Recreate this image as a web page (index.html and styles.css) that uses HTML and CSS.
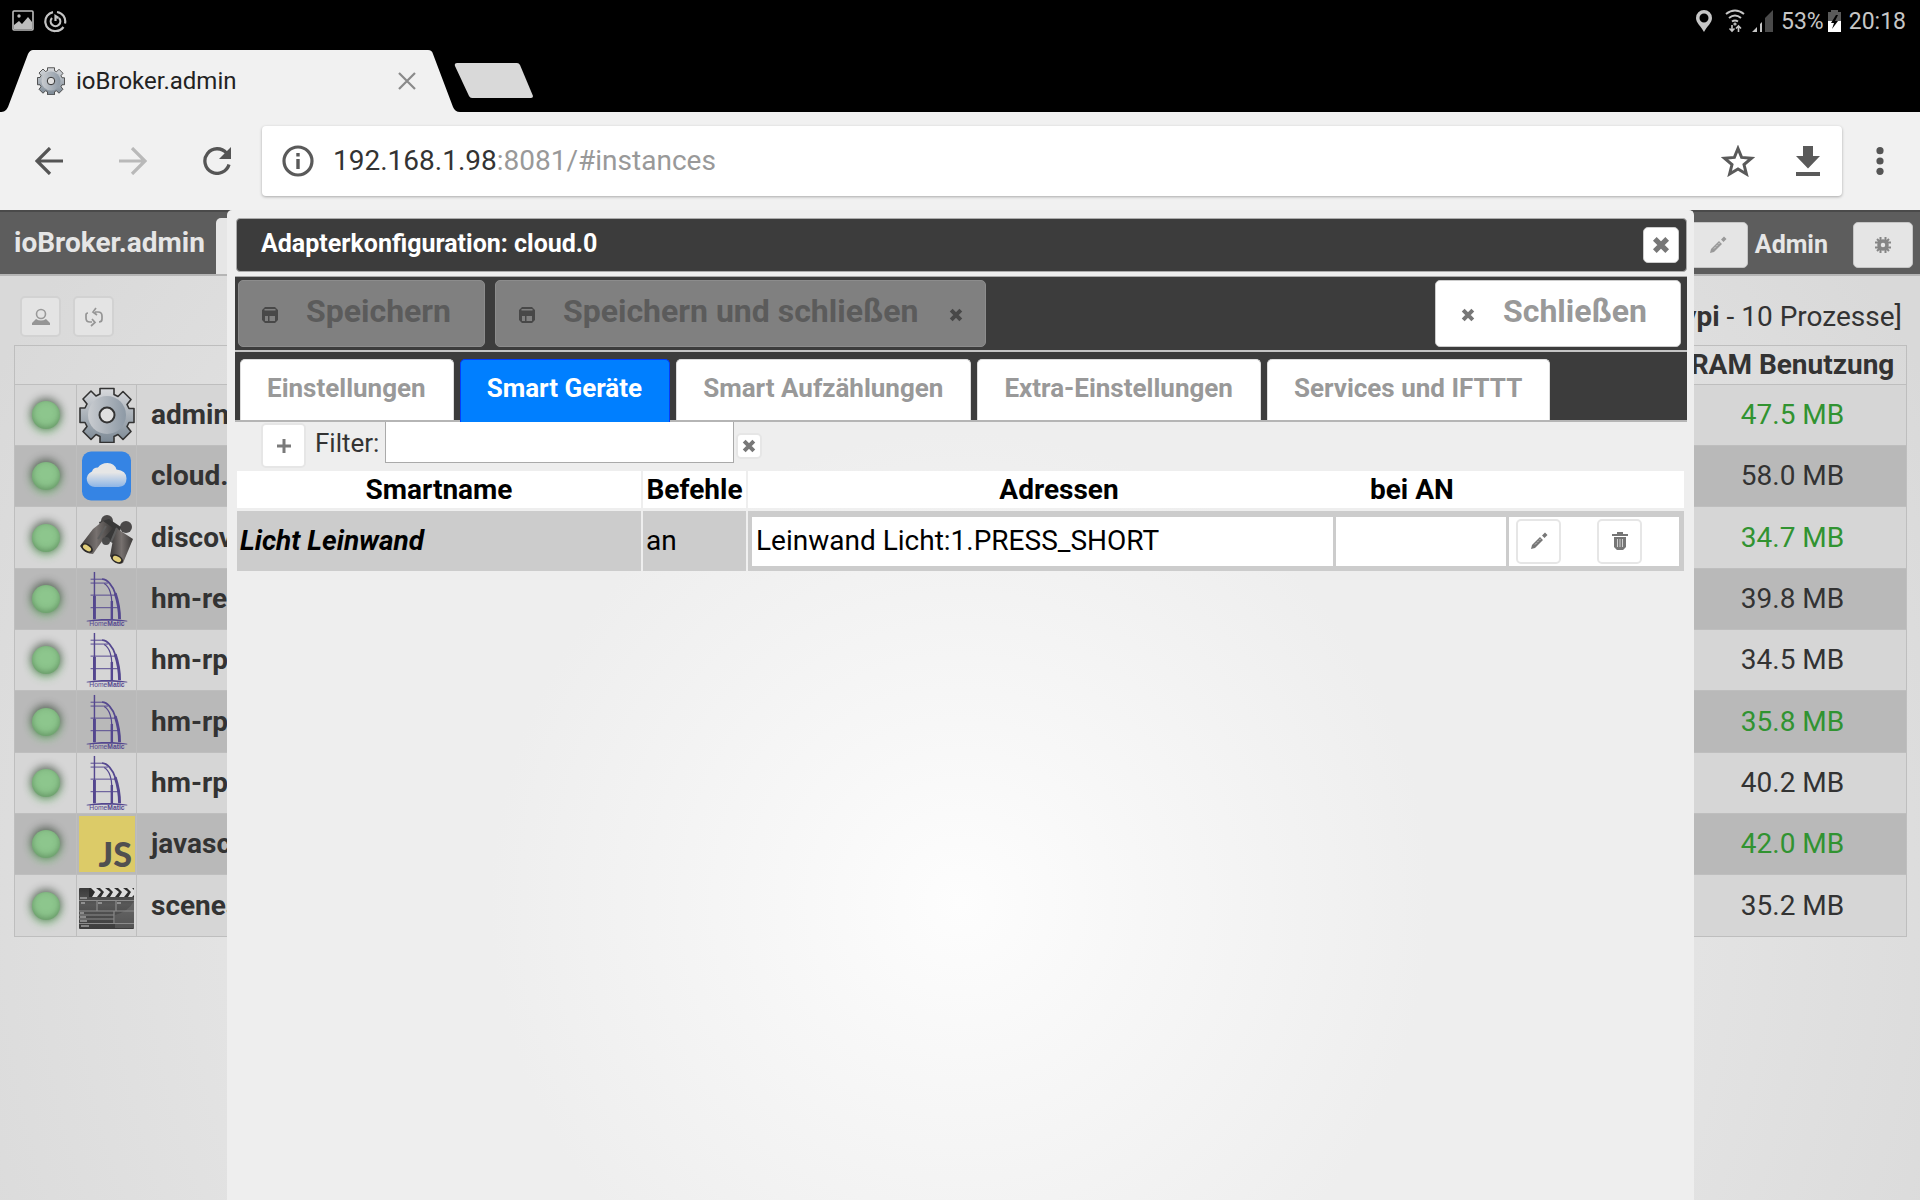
FILE: index.html
```html
<!DOCTYPE html>
<html lang="de">
<head>
<meta charset="utf-8">
<title>ioBroker.admin</title>
<link rel="stylesheet" href="styles.css">
</head>
<body>
<svg class="defs" aria-hidden="true">
  <defs>
    <linearGradient id="steel" x1="0" y1="0" x2="0" y2="1"><stop offset="0" stop-color="#d8dadd"/><stop offset="1" stop-color="#7b8894"/></linearGradient>
    <linearGradient id="steel2" x1="0" y1="0" x2="1" y2="0"><stop offset="0" stop-color="#c9ccd0"/><stop offset="1" stop-color="#8d99a5"/></linearGradient>
    <linearGradient id="cloudfill" x1="0" y1="0" x2="0" y2="1"><stop offset="0.4" stop-color="#e6e6e6"/><stop offset="1" stop-color="#8db5e6"/></linearGradient>
    <linearGradient id="tube" x1="0" y1="0" x2="1" y2="0"><stop offset="0" stop-color="#3b3938"/><stop offset="0.5" stop-color="#77716f"/><stop offset="1" stop-color="#3b3938"/></linearGradient>
    <linearGradient id="slate" x1="0" y1="0" x2="0" y2="1"><stop offset="0" stop-color="#3a3a3a"/><stop offset="0.4" stop-color="#585858"/><stop offset="1" stop-color="#3c3c3c"/></linearGradient>
    <symbol id="gear" viewBox="0 0 56 56">
      <path fill="url(#steel)" stroke="#333" stroke-width="1.6" stroke-linejoin="round" d="M21 1.500h14v6l4 2 5-5 8 8-4 5 2 4h5v14h-5l-2 4 4 5-8 8-5-5-4 2v6H21v-6l-4-2-5 5-8-8 4-5-2-4H1V21h5l2-4-4-5 8-8 5 5 4-2z"/>
      <circle cx="28" cy="28" r="19" fill="url(#steel2)"/>
      <circle cx="28" cy="28" r="7.500" fill="#e0e0e0" stroke="#333" stroke-width="2"/>
    </symbol>
    <symbol id="x" viewBox="0 0 16 16"><path d="M2.500 2.500l11 11M13.500 2.500l-11 11" stroke="currentColor" stroke-width="4.600"/></symbol>
    <symbol id="pen" viewBox="0 0 18 18"><path fill="currentColor" d="M1 17l1-4 8-8 3 3-8 8zM12 3.500L15 .5 17.500 3l-3 3z"/><path d="M5 12.500l6-6" stroke="#fff" stroke-opacity=".6" stroke-dasharray="2 1"/></symbol>
    <symbol id="disk" viewBox="0 0 16 16"><path fill="currentColor" fill-rule="evenodd" d="M3 0h10l3 3v10l-3 3H3l-3-3V3zM2.500 2v1.500h11V2zM3 9v5h3V9zm4.500 0v5H13V9z"/></symbol>
    <symbol id="hm" viewBox="0 0 56 58">
      <g fill="none" stroke="#54478f">
        <path stroke-width="1" d="M11 8.500h13M11 12.500h18M11 25h26M11 38h30"/>
        <path stroke-width="1.200" d="M25 13c6 3 8 13 8 20"/>
        <path stroke-width="1.800" d="M23 8.500c5 0 11 6 14 16"/>
        <path stroke-width="3" d="M36.500 23c3 9 4.500 18 4.500 27M15 26v24"/>
        <path stroke-width="2.500" d="M33 31v19"/>
        <path stroke-width="1.500" d="M15 1v49"/>
      </g>
      <path fill="#54478f" d="M7 51.500c12-2.500 30-2.500 42 0v.8c-12-1.200-30-1.200-42 0z"/>
      <text x="28" y="57" text-anchor="middle" class="hm-text">Home<tspan font-weight="700">Matic</tspan></text>
    </symbol>
  </defs>
</svg>

<header class="status">
  <div class="status-left">
    <svg width="22" height="22" viewBox="0 0 22 22"><rect x="1" y="1" width="20" height="19" rx="1" fill="none" stroke="#bdbdbd" stroke-width="1.600"/><path fill="#bdbdbd" d="M2 15l5-4 3 3 6-7 4 5v7H2z"/><circle cx="7" cy="6" r="1.700" fill="#bdbdbd"/></svg>
    <svg width="23" height="23" viewBox="0 0 23 23" fill="none" stroke="#c4c4c4" stroke-width="2.200"><path d="M9 2.200A9.500 9.500 0 0 0 11.500 21a9.500 9.500 0 0 0 8-4M13 2a9.500 9.500 0 0 1 8 11.500"/><path d="M8 8a4.800 4.800 0 1 0 7 0M11.500 11V6l3 2"/></svg>
  </div>
  <div class="status-right">
    <svg width="16" height="22" viewBox="0 0 16 22"><path fill="#c6c6c6" fill-rule="evenodd" d="M8 0a8 8 0 0 0-8 8c0 5 5 8 8 14 3-6 8-9 8-14a8 8 0 0 0-8-8zm0 3.500a4.500 4.500 0 1 1 0 9 4.500 4.500 0 0 1 0-9z"/></svg>
    <svg class="wifi" width="20" height="24" viewBox="0 0 20 24" fill="none" stroke="#c6c6c6" stroke-width="2"><path d="M1 5q9-7 18 0M4 9q6-5 12 0M7 12.500q3-2 6 0"/><circle cx="10" cy="15" r=".6"/><path stroke-width="1.600" d="M7 16v6M4.500 19.500L7 22l2.500-2.500M13.500 23v-6M11 19.500l2.500-2.500 2.500 2.500"/></svg>
    <svg width="21" height="22" viewBox="0 0 21 22"><path fill="#c6c6c6" d="M0 22l5-5v5zM8 22v-8l2-2v10z"/><path fill="#4a4a4a" d="M13 22V8l8-8v22z"/></svg>
    <span class="status-text">53%</span>
    <svg class="battery" width="13" height="22" viewBox="0 0 13 22"><path fill="#5a5a5a" d="M0 2h3V0h7v2h3v20H0z"/><path fill="#fff" d="M0 11h13v11H0z"/><path fill="#000" d="M8 5l-5 8h3l-2 6 6-8H7l3-6z"/></svg>
    <span class="status-text clock">20:18</span>
  </div>
</header>

<div class="tabstrip">
  <div class="browser-tab">
    <svg class="tab-shape" viewBox="0 0 460 62" preserveAspectRatio="none"><path fill="#f1f1f1" d="M0 62c4 0 6-1 8-5L28 4q2-4 5-4h395q4 0 5 4l20 53q2 5 7 5z"/></svg>
    <svg class="favicon" width="28" height="28"><use href="#gear"/></svg>
    <span class="tab-title">ioBroker.admin</span>
    <button class="plain tab-close" aria-label="Tab schließen"><svg width="18" height="18" viewBox="0 0 18 18"><path d="M1 1l16 16M17 1L1 17" stroke="#8a8a8a" stroke-width="2.200"/></svg></button>
  </div>
  <button class="plain new-tab" aria-label="Neuer Tab"><svg width="80" height="35" viewBox="0 0 80 35"><path fill="#d9d9d9" d="M3 0h60q2 0 3 2l13 31q0 2-2 2H18q-2 0-3-2L1 3q-1-3 2-3z"/></svg></button>
</div>

<nav class="browser-bar">
  <button class="plain nav-btn" aria-label="Zurück"><svg width="28" height="28" viewBox="0 0 28 28" fill="none" stroke="#555" stroke-width="3.200"><path d="M28 14H3M15 1L2 14l13 13"/></svg></button>
  <button class="plain nav-btn" aria-label="Vorwärts"><svg width="28" height="28" viewBox="0 0 28 28" fill="none" stroke="#b9b9b9" stroke-width="3.200"><path d="M0 14h25M13 1l13 13-13 13"/></svg></button>
  <button class="plain nav-btn" aria-label="Neu laden"><svg width="28" height="28" viewBox="0 0 28 28"><path d="M23.500 6A12.300 12.300 0 1 0 26 17.500" fill="none" stroke="#555" stroke-width="3.300"/><path fill="#555" d="M28 0v12H16z"/></svg></button>
  <div class="omnibox">
    <svg width="32" height="32" viewBox="0 0 32 32"><circle cx="16" cy="16" r="14" fill="none" stroke="#5a5a5a" stroke-width="3.200"/><path d="M16 8v3.500M16 14v10" stroke="#5a5a5a" stroke-width="3.400"/></svg>
    <span class="url">192.168.1.98<span class="url-rest">:8081/#instances</span></span>
    <button class="plain" aria-label="Lesezeichen"><svg width="34" height="32" viewBox="0 0 34 32"><path fill="none" stroke="#5a5a5a" stroke-width="3" d="M17 3.500l3.600 8.900 9.900.8-7.500 6.300 2.400 9.500L17 24l-8.400 5L11 19.500l-7.500-6.300 9.900-.8z"/></svg></button>
    <button class="plain download" aria-label="Herunterladen"><svg width="24" height="30" viewBox="0 0 24 30"><path fill="#5a5a5a" d="M7 0h10v10h7L12 22.500 0 10h7zM0 26h24v4H0z"/></svg></button>
  </div>
  <button class="plain menu" aria-label="Menü"><svg width="8" height="28" viewBox="0 0 8 28" fill="#555"><circle cx="4" cy="3.700" r="3.600"/><circle cx="4" cy="14" r="3.600"/><circle cx="4" cy="24.300" r="3.600"/></svg></button>
</nav>

<main class="page">
  <div class="app-bar">
    <span class="app-name">ioBroker.admin</span>
    <span class="app-tab"></span>
    <button class="app-btn edit" aria-label="Bearbeiten"><svg width="18" height="18"><use href="#pen"/></svg></button>
    <span class="user">Admin</span>
    <button class="app-btn" aria-label="Systemeinstellungen"><svg width="16" height="16" viewBox="0 0 16 16"><path d="M5.500 0v16M10.500 0v16M0 5.500h16M0 10.500h16M2 2l3 3M14 2l-3 3M2 14l3-3M14 14l-3-3" stroke="#858585" stroke-width="2"/><circle cx="8" cy="8" r="4" fill="#e5e5e5" stroke="#858585" stroke-width="3.500"/></svg></button>
  </div>
  <div class="tools">
    <button class="tool" aria-label="Expertenmodus"><svg width="18" height="18" viewBox="0 0 18 18"><circle cx="9" cy="6" r="4.500" fill="none" stroke="#999" stroke-width="1.600"/><path fill="#959595" d="M0 17v-2l4-4q5 3 10 0l4 4v2z"/></svg></button>
    <button class="tool" aria-label="Aktualisieren"><svg width="18" height="20" viewBox="0 0 18 20" fill="none" stroke="#959595" stroke-width="1.700"><path d="M7 15H5q-4 0-4-4V8q0-2 2-2M7 12l3 3.500L6 19M10 5h3q4 0 4 4v3q0 3-3 3M11 1L8 5l4 3"/></svg></button>
    <span class="host"><b>ypi</b> - 10 Prozesse]</span>
  </div>
  <table class="instances">
    <colgroup><col class="c-led"><col class="c-icon"><col><col class="c-ram"></colgroup>
    <thead><tr><th colspan="3"></th><th>RAM Benutzung</th></tr></thead>
    <tbody>
      <tr><td><i class="led"></i></td><td><svg class="ic" viewBox="0 0 56 56"><use href="#gear"/></svg></td><td class="name">admin.0</td><td class="ram ok">47.5 MB</td></tr>
      <tr><td><i class="led"></i></td><td><svg class="ic" viewBox="0 0 56 56"><rect x="3" y="3.500" width="49" height="49" rx="9" fill="#3584e4"/><path fill="url(#cloudfill)" d="M16 39a8 8 0 0 1-3-15.500q1-4 6-4 3-4.500 9.500-4.500 7 0 9 6.500 10 1 10 9 0 8-8 8.500z"/></svg></td><td class="name">cloud.0</td><td class="ram">58.0 MB</td></tr>
      <tr><td><i class="led"></i></td><td><svg class="ic" viewBox="0 0 56 56"><circle cx="28" cy="11" r="6" fill="#4b4949"/><circle cx="47" cy="17" r="6" fill="#4b4949"/><path fill="#383838" d="M20 12l10-3 12 8-4 18-12-6z"/><path fill="url(#tube)" d="M24 11L14 19 1 36q5 8 13 8l12-17 8-9z"/><path fill="url(#tube)" d="M37 18l17 11-10 24q-8 3-13-7l4-22z"/><path d="M27 16l-8 13M38 18l-6 14" stroke="#5e5e5e" stroke-width="2"/><circle cx="27" cy="31" r="4" fill="#4b4b4b"/><ellipse cx="8" cy="38" rx="6.500" ry="4" transform="rotate(32 8 38)" fill="#2c2928"/><ellipse cx="8" cy="38" rx="4.500" ry="2.500" transform="rotate(32 8 38)" fill="#e2cf7b"/><ellipse cx="38" cy="49" rx="6.500" ry="4" transform="rotate(28 38 49)" fill="#2c2928"/><ellipse cx="38" cy="49" rx="4.500" ry="2.500" transform="rotate(28 38 49)" fill="#e2cf7b"/></svg></td><td class="name">discov</td><td class="ram ok">34.7 MB</td></tr>
      <tr><td><i class="led"></i></td><td><svg class="ic"><use href="#hm"/></svg></td><td class="name">hm-re</td><td class="ram">39.8 MB</td></tr>
      <tr><td><i class="led"></i></td><td><svg class="ic"><use href="#hm"/></svg></td><td class="name">hm-rpc.0</td><td class="ram">34.5 MB</td></tr>
      <tr><td><i class="led"></i></td><td><svg class="ic"><use href="#hm"/></svg></td><td class="name">hm-rpc.1</td><td class="ram ok">35.8 MB</td></tr>
      <tr><td><i class="led"></i></td><td><svg class="ic"><use href="#hm"/></svg></td><td class="name">hm-rpc.2</td><td class="ram">40.2 MB</td></tr>
      <tr><td><i class="led"></i></td><td><svg class="ic" viewBox="0 0 56 56"><path fill="#dccb68" d="M0 0h56v56H0z"/><text x="53" y="51" text-anchor="end" class="js-text">JS</text></svg></td><td class="name">javascript.0</td><td class="ram ok">42.0 MB</td></tr>
      <tr><td><i class="led"></i></td><td><svg class="ic" viewBox="0 0 56 56"><rect y="10" width="55" height="41" rx="1" fill="url(#slate)"/><path fill="#2e2e2e" d="M10 10h45v9H10z"/><path fill="#ddd" d="M12 10h5l5 4-4 5h-5l3-5zM21 10h5l5 4-4 5h-5l3-5zM30 10h5l5 4-4 5h-5l3-5zM39 10h5l5 4-4 5h-5l3-5zM48 10h5l2 2v5l-2 2h-4l3-5z"/><path fill="#888" d="M36 37q14-4 19-14v27H36z" opacity=".3"/><path d="M0 22.500h55M0 33h55M0 37h35M0 41h35M0 45.500h55M18 23v10M37 23v10M35 33v12" stroke="#8b8b8b" stroke-width="1.200"/><path d="M1 20h7M2 25h4M19 25h4M38 25h4M1 35h4M1 39h6M1 43h7M2 48h8" stroke="#ccc"/></svg></td><td class="name">scenes.0</td><td class="ram">35.2 MB</td></tr>
    </tbody>
  </table>

  <section class="dialog" role="dialog" aria-labelledby="dlg-title">
    <div class="dlg-title">
      <span id="dlg-title">Adapterkonfiguration: cloud.0</span>
      <button class="dlg-x" aria-label="Schließen"><svg width="18" height="18"><use href="#x"/></svg></button>
    </div>
    <div class="dlg-tools">
      <button class="action" disabled><svg width="16" height="16"><use href="#disk"/></svg><span>Speichern</span></button>
      <button class="action both" disabled><svg width="16" height="16"><use href="#disk"/></svg><span>Speichern und schließen</span><svg width="14" height="14"><use href="#x"/></svg></button>
      <button class="action close"><svg width="14" height="14"><use href="#x"/></svg><span>Schließen</span></button>
    </div>
    <div class="dlg-tabs">
      <a href="#einstellungen">Einstellungen</a>
      <a href="#geraete" class="active">Smart Geräte</a>
      <a href="#aufzaehlungen">Smart Aufzählungen</a>
      <a href="#extra">Extra-Einstellungen</a>
      <a href="#services">Services und IFTTT</a>
    </div>
    <div class="filter">
      <button class="small add" aria-label="Hinzufügen"><svg width="14" height="14" viewBox="0 0 14 14"><path d="M7 0v14M0 7h14" stroke="#7a7a7a" stroke-width="3"/></svg></button>
      <label for="filter">Filter:</label>
      <input id="filter" type="text">
      <button class="small clear" aria-label="Filter löschen"><svg width="14" height="14"><use href="#x"/></svg></button>
    </div>
    <table class="devices">
      <thead><tr><th class="c-name">Smartname</th><th class="c-cmd">Befehle</th><th><div class="addr-head"><span>Adressen</span><span>bei AN</span></div></th></tr></thead>
      <tbody><tr><td class="smart">Licht Leinwand</td><td>an</td><td class="addr">
        <div class="addr-row">
          <span>Leinwand Licht:1.PRESS_SHORT</span>
          <span></span>
          <span class="row-btns"><button class="small" aria-label="Bearbeiten"><svg width="18" height="18"><use href="#pen"/></svg></button><button class="small" aria-label="Löschen"><svg width="16" height="18" viewBox="0 0 16 18"><path fill="#757575" d="M5 0h6v2h5v2H0V2h5zM2 5h12v10l-3 3H5l-3-3z"/><path d="M5.500 7v8M8 7v8M10.500 7v8" stroke="#d0d0d0"/></svg></button></span>
        </div></td></tr></tbody>
    </table>
  </section>
</main>
</body>
</html>
```

FILE: styles.css
```css
* { box-sizing: border-box; }
body {
  margin: 0;
  min-height: 100vh;
  display: flex;
  flex-direction: column;
  background: #000;
  color: #333;
  font: 28px/32px Roboto, "Liberation Sans", sans-serif;
}
button { font: inherit; cursor: pointer; padding: 0; }
svg { display: block; flex: none; }
.defs { position: absolute; width: 0; height: 0; }
.plain { border: 0; background: none; display: flex; }

/* system status bar */
.status { height: 50px; padding: 0 14px 8px 12px; display: flex; justify-content: space-between; align-items: center; }
.status-left { display: flex; gap: 10px; }
.status-right { display: flex; align-items: center; color: #c6c6c6; font-size: 23px; line-height: 28px; }
.status .wifi { margin: 0 7px 0 13px; }
.status-text { margin-left: 8px; padding-top: 2px; }
.battery { margin-left: 4px; }

/* browser tabs */
.tabstrip { height: 62px; display: flex; }
.browser-tab { position: relative; width: 460px; display: flex; align-items: center; padding: 0 44px 0 37px; }
.tab-shape { position: absolute; inset: 0; width: 100%; height: 100%; }
.favicon, .tab-title, .tab-close { position: relative; }
.tab-title { flex: 1; padding-left: 11px; font-size: 24px; color: #222; }
.new-tab { margin: 13px 0 0 -6px; height: 35px; }

.browser-bar { height: 98px; padding: 0 36px 0 35px; display: flex; align-items: center; background: #f1f1f1; }
.nav-btn { margin-right: 56px; }
.nav-btn:nth-child(3) { margin-right: 31px; }
.omnibox {
  flex: 1;
  height: 70px;
  padding: 0 22px 0 20px;
  display: flex;
  align-items: center;
  background: #fff;
  border-radius: 4px;
  box-shadow: 0 1px 3px rgba(0, 0, 0, .3);
}
.url { flex: 1; padding-left: 19px; }
.url-rest { color: #999; }
.download { margin-left: 41px; }
.menu { margin-left: 34px; }

/* application page */
.page {
  position: relative;
  flex: 1;
  overflow: hidden;
  background: radial-gradient(circle at 50% 690px, #eee 0, #e4e4e4 700px, #d9d9d9 1100px);
}
.app-bar {
  height: 66px;
  padding: 3px 7px 0 14px;
  display: flex;
  align-items: center;
  background: #5d5d5d;
  border-top: 2px solid #4a4a4a;
  border-bottom: 2px solid #b5b5b5;
  color: #e6e6e6;
  font-weight: 700;
}
.app-name { width: 202px; padding-bottom: 4px; }
.app-tab { width: 60px; height: 56px; align-self: flex-end; background: #e6e6e6; border-radius: 5px 5px 0 0; }
.app-btn {
  width: 60px;
  height: 46px;
  display: flex;
  align-items: center;
  justify-content: center;
  background: #e5e5e5;
  border: 1px solid #c5c5c5;
  border-radius: 5px;
  color: #999;
}
.app-btn.edit { margin-left: auto; }
.user { margin: 0 25px 0 7px; font-size: 25px; }
.tools { height: 69px; padding: 12px 18px 0 20px; display: flex; align-items: center; gap: 12px; }
.tool {
  width: 41px;
  height: 41px;
  display: flex;
  align-items: center;
  justify-content: center;
  background: #e4e4e4;
  border: 2px solid #d2d2d2;
  border-radius: 5px;
}
.host { margin-left: auto; }
.instances { width: calc(100% - 27px); margin: 0 13px 0 14px; border-collapse: collapse; table-layout: fixed; }
.instances th, .instances td { border: 1px solid #bebebe; padding: 0; }
.instances th { height: 39px; }
.instances th + th { border-left: 0; }
.instances td { height: 61px; }
.instances tr:nth-child(3n) td { height: 62px; }
.instances tbody tr:nth-child(odd) { background: #d6d6d6; }
.instances tbody tr:nth-child(even) { background: #b9b9b9; }
.c-led { width: 62px; }
.c-icon { width: 60px; }
.c-ram { width: 228px; }
.led {
  display: block;
  width: 28px;
  height: 28px;
  margin: auto;
  border-radius: 50%;
  background: #8dc68d;
  box-shadow: 0 -2px 8px 1px rgba(0, 0, 0, .45), inset 0 -2px 6px rgba(60, 100, 60, .5), 0 3px 10px #8dc68d;
}
.ic { width: 56px; height: 56px; margin: auto; overflow: visible; }
.hm-text { font: 7px/7px "Liberation Sans", sans-serif; fill: #54478f; }
.js-text { font: 900 34px/34px Lato, sans-serif; fill: #505050; }
.instances td.name { padding-left: 14px; font-weight: 700; }
.ram { text-align: center; }
.ram.ok { color: #319331; }

/* adapter configuration dialog */
.dialog {
  position: absolute;
  inset: 0 226px 0 227px;
  padding: 6px 5px 0 6px;
  border-radius: 5px 5px 0 0;
  border: 2px solid #eee;
  border-bottom: 0;
  background: radial-gradient(circle at 50% 690px, #fdfdfd 0, #f7f7f7 180px, #eee 470px);
}
.dlg-title {
  height: 54px;
  margin: 0 0 4px 1px;
  padding: 0 7px 2px 24px;
  display: flex;
  align-items: center;
  justify-content: space-between;
  background: #3c3c3c;
  border: 1px solid #aaa;
  border-radius: 4px;
  color: #fff;
  font-size: 25px;
  font-weight: 700;
}
.dlg-x {
  width: 36px;
  height: 36px;
  margin-top: 2px;
  display: flex;
  align-items: center;
  justify-content: center;
  background: #fff;
  border: 1px solid #ccc;
  border-radius: 5px;
  color: #777;
}
.dlg-tools {
  height: 76px;
  padding: 3px 6px 3px 3px;
  display: flex;
  gap: 10px;
  background: #3c3c3c;
  border-top: 1px solid #aaa;
  border-bottom: 2px solid #c5c5c5;
}
.action {
  height: 67px;
  padding: 0 33px 0 23px;
  display: flex;
  align-items: center;
  background: #808080;
  border: 1px solid #8c8c8c;
  border-radius: 5px;
  color: #5b5b5b;
  font-size: 32px;
  font-weight: 700;
}
.action span { padding: 0 0 6px 28px; }
.action.both span { padding-right: 31px; }
.action svg { margin-top: 2px; color: #484848; }
.action.both { padding-right: 22px; }
.action.close { margin-left: auto; background: #fff; border-color: #ccc; color: #999; padding-left: 25px; }
.action.close svg { color: #777; }
.dlg-tabs {
  height: 70px;
  padding: 7px 5px 0;
  display: flex;
  gap: 6px;
  background: #3c3c3c;
  border-bottom: 2px solid #b5b5b5;
}
.dlg-tabs a {
  padding: 12px 27px 0 26px;
  background: #fff;
  border: 1px solid #ddd;
  border-bottom: 0;
  border-radius: 5px 5px 0 0;
  color: #999;
  font-size: 26px;
  font-weight: 700;
  text-decoration: none;
}
.dlg-tabs .active { margin-bottom: -2px; background: #007fff; border-color: #003eff; color: #fff; }
.filter { height: 46px; padding-left: 26px; display: flex; font-size: 26px; }
.filter label { padding: 5px 6px 0 9px; }
.filter input { width: 349px; height: 41px; padding: 0 6px; border: 1px solid #aaa; border-top: 0; background: #fff; font: inherit; }
.small {
  width: 45px;
  height: 45px;
  display: flex;
  align-items: center;
  justify-content: center;
  background: #fff;
  border: 2px solid #e6e6e6;
  border-radius: 5px;
  color: #777;
}
.add { margin-top: 1px; }
.clear { width: 26px; height: 26px; margin: 11px 0 0 2px; }
.devices { width: calc(100% - 1px); border-spacing: 2px 3px; table-layout: fixed; color: #000; }
.devices th { height: 37px; padding: 0; background: #fff; }
.devices td { height: 60px; padding: 0 3px; background: #ccc; }
.c-name { width: 404px; }
.c-cmd { width: 103px; }
.smart { font-weight: 700; font-style: italic; }
.addr-head { display: flex; }
.addr-head span:first-child { flex: 1; }
.addr-head span:last-child { width: 314px; text-align: left; }
.devices .addr { padding: 0 5px 0 4px; }
.addr-row { display: grid; grid-template-columns: 1fr 170px 170px; gap: 3px; }
.addr-row > span { height: 49px; padding: 0 4px; line-height: 48px; background: #fff; }
.addr-row .row-btns { padding: 2px 7px; display: flex; gap: 36px; }
```
